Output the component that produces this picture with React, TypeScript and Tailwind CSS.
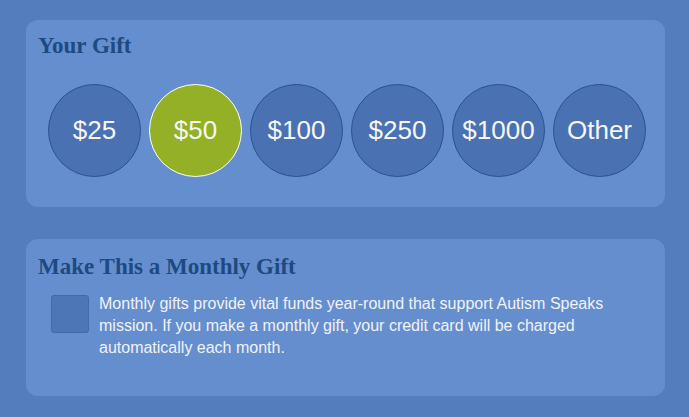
import React, { useState } from 'react';

const amounts = ['$25', '$50', '$100', '$250', '$1000', 'Other'];

export default function App() {
  const [selected, setSelected] = useState('$50');
  const [monthly, setMonthly] = useState(false);

  return (
    <div className="w-[689px] h-[417px] bg-[#547dbd] pl-[26px] pr-[24px] pt-[20px] font-['Liberation_Sans',Arial,sans-serif]">
      <div className="h-[187px] rounded-[12px] bg-[#658ece] pl-[12px] pt-[11px]">
        <h2 className="font-['Liberation_Serif',serif] font-bold text-[23px] leading-[30px] text-[#1d4a80]">
          Your Gift
        </h2>
        <div className="flex gap-[8px] pl-[10px] pt-[23px]">
          {amounts.map((a) => (
            <button
              key={a}
              onClick={() => setSelected(a)}
              className={
                a === selected
                  ? 'w-[93px] h-[93px] rounded-full border border-white bg-[#93b026] text-[#f6f6f2] text-[26px] flex items-center justify-center'
                  : 'w-[93px] h-[93px] rounded-full border border-[#26548e] bg-[#4a72b3] text-[#f6f6f2] text-[26px] flex items-center justify-center'
              }
            >
              {a}
            </button>
          ))}
        </div>
      </div>

      <div className="mt-[32px] h-[157px] rounded-[12px] bg-[#658ece] pl-[12px] pt-[13px]">
        <h2 className="font-['Liberation_Serif',serif] font-bold text-[23px] leading-[30px] text-[#1d4a80]">
          Make This a Monthly Gift
        </h2>
        <div className="flex gap-[10px] pl-[13px] pt-[13px]">
          <button
            onClick={() => setMonthly(!monthly)}
            className="w-[38px] h-[38px] shrink-0 rounded-[3px] border border-[#4469a8] bg-[#4d76b6] text-white"
          >
            {monthly ? '✓' : ''}
          </button>
          <p className="text-[16px] leading-[22px] text-[#f0f2f7] -mt-[2px] w-[530px]">
            Monthly gifts provide vital funds year-round that support Autism Speaks mission. If you make a monthly gift, your credit card will be charged automatically each month.
          </p>
        </div>
      </div>
    </div>
  );
}
